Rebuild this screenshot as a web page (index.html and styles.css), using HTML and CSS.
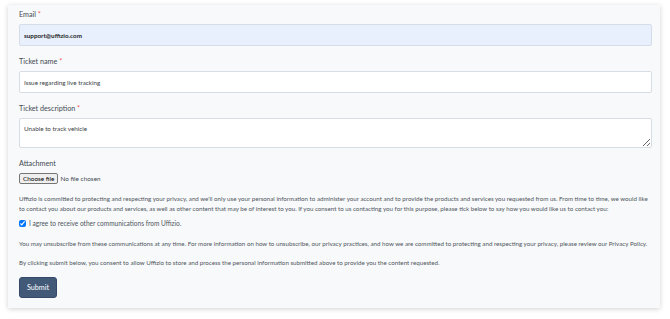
FILE: index.html
```html
<!DOCTYPE html>
<html lang="en">
<head>
  <meta charset="UTF-8">
  <meta name="viewport" content="width=device-width, initial-scale=1.0">
  <title>Support Ticket - Uffizio</title>
  <link rel="stylesheet" href="styles.css">
</head>
<body>
  <form class="ticket-form">
    <div class="field">
      <label class="field-label">Email <span class="required">*</span></label>
      <input class="field-input autofilled" type="email" value="support@uffizio.com">
    </div>

    <div class="field">
      <label class="field-label">Ticket name <span class="required">*</span></label>
      <input class="field-input" type="text" value="Issue regarding live tracking">
    </div>

    <div class="field">
      <label class="field-label">Ticket description <span class="required">*</span></label>
      <textarea class="field-input field-textarea">Unable to track vehicle</textarea>
    </div>

    <div class="field">
      <label class="field-label">Attachment</label>
      <label class="file-picker">
        <input class="file-input" type="file">
        <span class="file-button">Choose file</span>
        <span class="file-name">No file chosen</span>
      </label>
    </div>

    <p class="legal">Uffizio is committed to protecting and respecting your privacy, and we'll only use your personal information to administer your account and to provide the products and services you requested from us. From time to time, we would like to contact you about our products and services, as well as other content that may be of interest to you. If you consent to us contacting you for this purpose, please tick below to say how you would like us to contact you:</p>

    <label class="consent">
      <input type="checkbox" checked>
      <span>I agree to receive other communications from Uffizio.</span>
    </label>

    <p class="legal">You may unsubscribe from these communications at any time. For more information on how to unsubscribe, our privacy practices, and how we are committed to protecting and respecting your privacy, please review our Privacy Policy.</p>

    <p class="legal">By clicking submit below, you consent to allow Uffizio to store and process the personal information submitted above to provide you the content requested.</p>

    <button class="submit-button" type="button">Submit</button>
  </form>
</body>
</html>
```

FILE: styles.css
```css
:root {
  --text-main: #454b52;
  --text-soft: #50565d;
  --required: #f2545b;
  --border: #d6dde6;
  --card-bg: #f7f9fb;
  --autofill: #e8f0fe;
  --button: #425a78;
}

body {
  font-family: 'Lato', sans-serif;
  background: #ffffff;
  color: var(--text-main);
  margin: 0;
  padding: 5px 10px 11px 8px;
}

.ticket-form {
  background: var(--card-bg);
  box-shadow: 0 1px 5px rgba(0, 0, 0, 0.18);
  padding: 4px 8px 10px 11px;
  display: flex;
  flex-direction: column;
}

.field {
  display: flex;
  flex-direction: column;
  gap: 3px;
  margin-bottom: 10px;
}

.field-label {
  font-size: 7.2px;
  line-height: 12px;
  color: var(--text-main);
}

.required {
  color: var(--required);
}

.field-input {
  box-sizing: border-box;
  height: 22px;
  width: 100%;
  border: 1px solid var(--border);
  border-radius: 2px;
  background: #ffffff;
  padding: 0 4px;
  font-family: 'Lato', sans-serif;
  font-size: 6.3px;
  color: #3a3f45;
  outline: none;
}

.autofilled {
  background: var(--autofill);
  font-weight: 700;
  color: #222;
}

.field-textarea {
  height: 30px;
  padding: 6px 4px;
  resize: vertical;
}

.file-picker {
  display: flex;
  align-items: center;
  gap: 2px;
  font-size: 6.4px;
  color: var(--text-main);
}

.file-input {
  display: none;
}

.file-button {
  background: #efefef;
  border: 1px solid #767676;
  border-radius: 2px;
  padding: 1px 3px;
  line-height: 7px;
  color: #000;
}

.legal {
  font-size: 6.2px;
  line-height: 10px;
  color: var(--text-soft);
  margin: 0;
}

.consent {
  display: flex;
  align-items: center;
  gap: 3px;
  font-size: 6.55px;
  color: var(--text-soft);
  margin: 6px 0 12px;
}

.consent input {
  width: 7px;
  height: 7px;
  margin: 0;
}

.legal + .legal {
  margin-top: 9px;
}

.submit-button {
  align-self: flex-start;
  margin-top: 9px;
  width: 38px;
  height: 21px;
  background: var(--button);
  color: #ffffff;
  border: 1px solid #34496a;
  border-radius: 3px;
  font-family: 'Lato', sans-serif;
  font-size: 7.2px;
  padding: 0;
}
```
